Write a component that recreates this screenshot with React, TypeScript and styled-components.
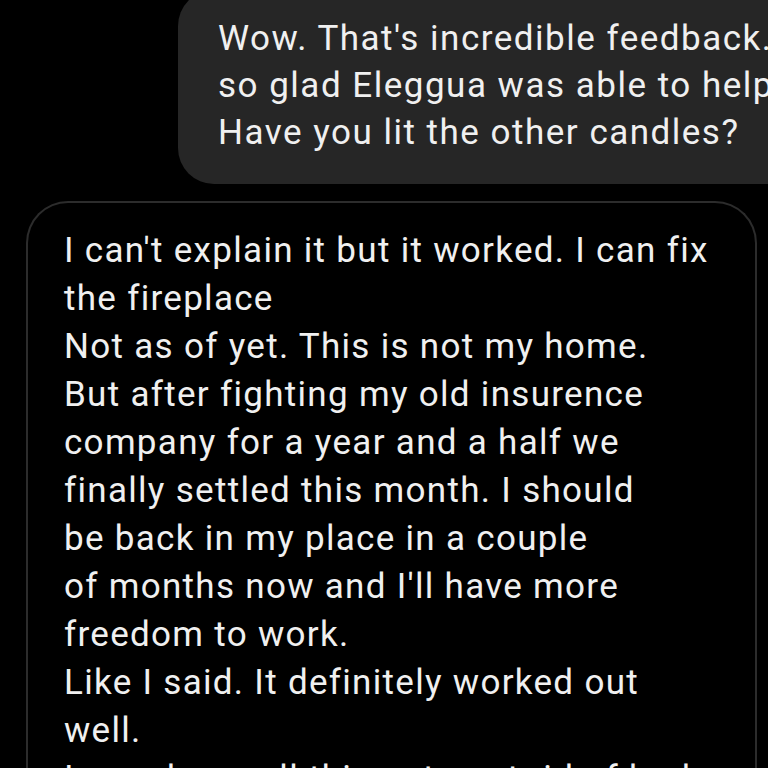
import React from "react";
import styled, { createGlobalStyle } from "styled-components";

const Global = createGlobalStyle`
  html, body {
    margin: 0;
    padding: 0;
    background: #000;
    overflow: hidden;
  }
  body {
    width: 768px;
    height: 768px;
    font-family: Roboto, "Liberation Sans", sans-serif;
  }
`;

const Screen = styled.div`
  width: 768px;
  height: 768px;
  background: #000;
  overflow: hidden;
  display: flex;
  flex-direction: column;
  gap: 17px;
`;

const SentRow = styled.div`
  display: flex;
  justify-content: flex-start;
  padding-left: 178px;
  margin-top: -10px;
`;

const SentBubble = styled.div`
  flex: none;
  width: 700px;
  background: #262626;
  border-radius: 36px;
  padding: 25px 40px 28px 40px;
  box-sizing: border-box;
`;

const ReceivedRow = styled.div`
  display: flex;
  padding: 0 11px 0 26px;
`;

const ReceivedBubble = styled.div`
  flex: 1;
  border: 2px solid #2c2c2c;
  border-bottom: none;
  border-radius: 42px 42px 0 0;
  padding: 24px 20px 0 36px;
  min-height: 600px;
`;

const Line = styled.div<{ $lh: number; $ls: number }>`
  font-size: 35px;
  line-height: ${(p) => p.$lh}px;
  color: #f0f0f0;
  white-space: nowrap;
  letter-spacing: ${(p) => p.$ls}px;
`;

const sent = [
  "Wow. That's incredible feedback. I'm",
  "so glad Eleggua was able to help.",
  "Have you lit the other candles?",
];

const received = [
  "I can't explain it but it worked. I can fix",
  "the fireplace",
  "Not as of yet. This is not my home.",
  "But after fighting my old insurence",
  "company for a year and a half we",
  "finally settled this month. I should",
  "be back in my place in a couple",
  "of months now and I'll have more",
  "freedom to work.",
  "Like I said. It definitely worked out",
  "well.",
  "I can do small things to get rid of bad",
];

export default function App() {
  return (
    <>
      <Global />
      <Screen>
        <SentRow>
          <SentBubble>
            {sent.map((t, i) => (
              <Line key={i} $lh={47} $ls={1.5}>
                {t}
              </Line>
            ))}
          </SentBubble>
        </SentRow>
        <ReceivedRow>
          <ReceivedBubble>
            {received.map((t, i) => (
              <Line key={i} $lh={48} $ls={1.3}>
                {t}
              </Line>
            ))}
          </ReceivedBubble>
        </ReceivedRow>
      </Screen>
    </>
  );
}
